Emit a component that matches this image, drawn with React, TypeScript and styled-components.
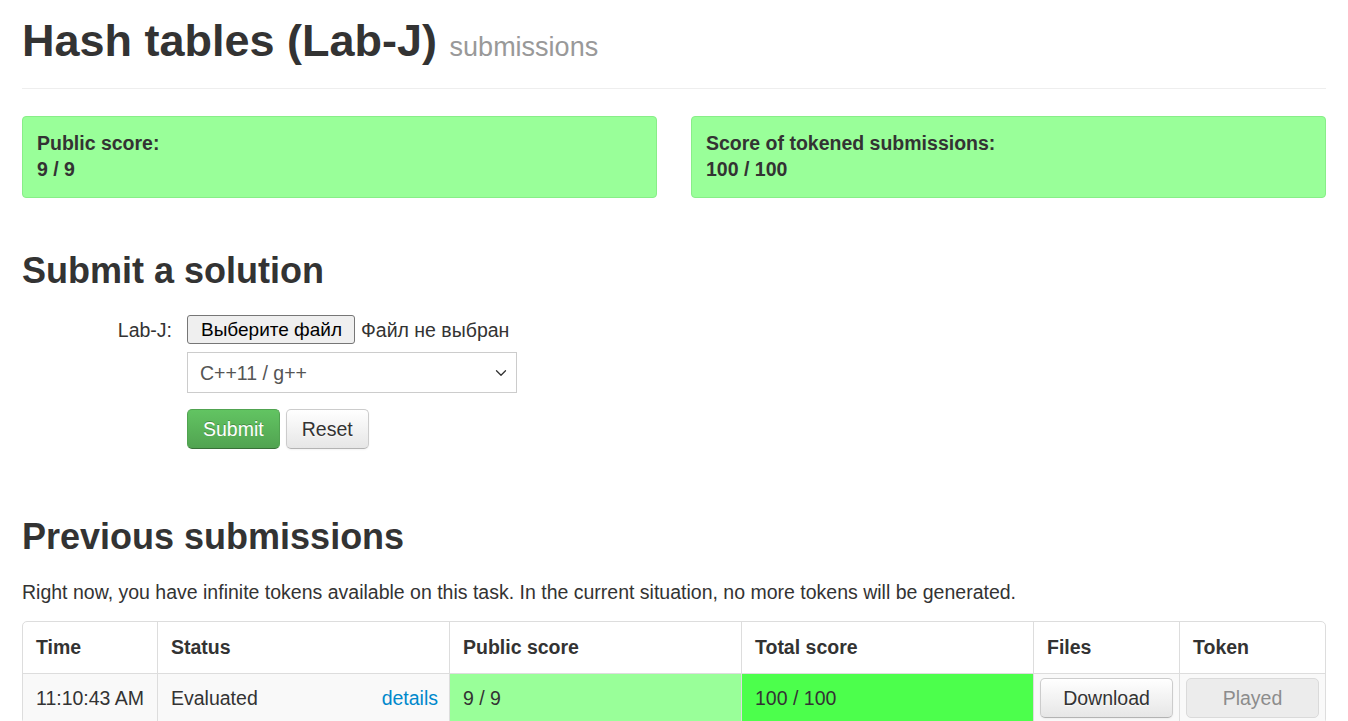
import React from "react";
import styled, { createGlobalStyle } from "styled-components";
import { ChevronDown } from "lucide-react";

const Global = createGlobalStyle`
  * { box-sizing: border-box; }
  html, body { margin: 0; padding: 0; background: #fff; }
  body {
    font-family: "Liberation Sans", Arial, sans-serif;
    font-size: 19.5px;
    line-height: 26px;
    color: #333;
  }
`;

const Page = styled.div`
  padding: 0 22px;
  width: 1348px;
`;

const PageHeader = styled.div`
  padding: 16px 0 16px;
  border-bottom: 1px solid #eee;
`;

const Title = styled.h1`
  margin: 0;
  font-size: 45px;
  line-height: 50px;
  font-weight: bold;
  color: #333;
`;

const Small = styled.small`
  font-size: 27px;
  font-weight: normal;
  color: #999;
`;

const ScoreGrid = styled.div`
  display: grid;
  grid-template-columns: 1fr 1fr;
  column-gap: 34px;
  margin-top: 27px;
`;

const ScoreBox = styled.div`
  background: #99ff99;
  border: 1px solid #88ee88;
  border-radius: 4px;
  padding: 13px 14px 15px;
  font-weight: bold;
  line-height: 26px;
`;

const SectionTitle = styled.h2<{ $top: number; $bottom: number }>`
  margin: ${(p) => p.$top}px 0 ${(p) => p.$bottom}px;
  font-size: 36px;
  line-height: 44px;
  font-weight: bold;
  color: #333;
`;

const FormRow = styled.div`
  display: grid;
  grid-template-columns: 150px 1fr;
  column-gap: 15px;
`;

const Label = styled.label`
  text-align: right;
  line-height: 29px;
  padding-top: 1px;
`;

const Controls = styled.div`
  display: flex;
  flex-direction: column;
  align-items: flex-start;
`;

const FileLine = styled.div`
  display: flex;
  align-items: center;
  gap: 6px;
  height: 29px;
`;

const FileButton = styled.button`
  height: 29px;
  padding: 0 12px 0 13px;
  background: #efefef;
  border: 1px solid #767676;
  border-radius: 3px;
  font-family: "Liberation Sans", Arial, sans-serif;
  font-size: 19px;
  color: #000;
`;

const FileName = styled.span`
  font-size: 19.5px;
  color: #333;
`;

const Select = styled.div`
  margin-top: 8px;
  width: 330px;
  height: 41px;
  border: 1px solid #ccc;
  display: flex;
  align-items: center;
  justify-content: space-between;
  padding: 0 6px 0 12px;
  color: #555;
  background: #fff;
`;

const ButtonRow = styled.div`
  margin-top: 16px;
  display: flex;
  gap: 6px;
`;

const Btn = styled.button<{ $variant?: "success" | "default" | "disabled"; $block?: boolean }>`
  font-family: "Liberation Sans", Arial, sans-serif;
  font-size: 19.5px;
  line-height: 26px;
  padding: 6px 15px;
  border-radius: 5px;
  border: 1px solid;
  cursor: pointer;
  width: ${(p) => (p.$block ? "100%" : "auto")};
  ${(p) =>
    p.$variant === "success"
      ? `
    color: #fff;
    text-shadow: 0 -1px 0 rgba(0,0,0,0.25);
    background: linear-gradient(to bottom, #62c462, #51a351);
    border-color: #51a351 #51a351 #387038;
  `
      : p.$variant === "disabled"
      ? `
    color: #8c8c8c;
    background: #ececec;
    border-color: #dadada;
    cursor: default;
  `
      : `
    color: #333;
    text-shadow: 0 1px 1px rgba(255,255,255,0.75);
    background: linear-gradient(to bottom, #ffffff, #e6e6e6);
    border-color: #cccccc #cccccc #b3b3b3;
    box-shadow: inset 0 1px 0 rgba(255,255,255,.2), 0 1px 2px rgba(0,0,0,.05);
  `}
`;

const Para = styled.p`
  margin: 20px 0 16px;
  line-height: 26px;
`;

const Table = styled.table`
  width: 1304px;
  table-layout: fixed;
  border-collapse: separate;
  border-spacing: 0;
  border: 1px solid #ddd;
  border-radius: 5px;
`;

const Th = styled.th<{ $first?: boolean }>`
  text-align: left;
  font-weight: bold;
  padding: 13px 13px;
  line-height: 25px;
  border-left: ${(p) => (p.$first ? "none" : "1px solid #ddd")};
`;

const Tr = styled.tr`
  background: #f9f9f9;
`;

const Td = styled.td<{ $first?: boolean; $bg?: string; $tight?: boolean }>`
  padding: ${(p) => (p.$tight ? "4px 6px" : "12px 11px 12px 13px")};
  line-height: 25px;
  vertical-align: top;
  border-top: 1px solid #ddd;
  border-left: ${(p) => (p.$first ? "none" : "1px solid #ddd")};
  background: ${(p) => p.$bg || "transparent"};
`;

const Details = styled.a`
  float: right;
  color: #0088cc;
  text-decoration: none;
`;

export default function App() {
  return (
    <Page>
      <Global />
      <PageHeader>
        <Title>
          Hash tables (Lab-J) <Small>submissions</Small>
        </Title>
      </PageHeader>

      <ScoreGrid>
        <ScoreBox>
          Public score:
          <br />9 / 9
        </ScoreBox>
        <ScoreBox>
          Score of tokened submissions:
          <br />100 / 100
        </ScoreBox>
      </ScoreGrid>

      <SectionTitle $top={51} $bottom={22}>Submit a solution</SectionTitle>

      <FormRow>
        <Label>Lab-J:</Label>
        <Controls>
          <FileLine>
            <FileButton type="button">Выберите файл</FileButton>
            <FileName>Файл не выбран</FileName>
          </FileLine>
          <Select>
            <span>C++11 / g++</span>
            <ChevronDown size={18} strokeWidth={1.75} color="#333" />
          </Select>
          <ButtonRow>
            <Btn $variant="success">Submit</Btn>
            <Btn>Reset</Btn>
          </ButtonRow>
        </Controls>
      </FormRow>

      <SectionTitle $top={66} $bottom={0}>Previous submissions</SectionTitle>
      <Para>
        Right now, you have infinite tokens available on this task. In the current situation, no
        more tokens will be generated.
      </Para>

      <Table>
        <colgroup>
          <col style={{ width: 134 }} />
          <col style={{ width: 292 }} />
          <col style={{ width: 292 }} />
          <col style={{ width: 292 }} />
          <col style={{ width: 146 }} />
          <col style={{ width: 146 }} />
        </colgroup>
        <thead>
          <tr>
            <Th $first>Time</Th>
            <Th>Status</Th>
            <Th>Public score</Th>
            <Th>Total score</Th>
            <Th>Files</Th>
            <Th>Token</Th>
          </tr>
        </thead>
        <tbody>
          <Tr>
            <Td $first>11:10:43 AM</Td>
            <Td>
              Evaluated
              <Details href="#">details</Details>
            </Td>
            <Td $bg="#99ff99">9 / 9</Td>
            <Td $bg="#4cff4c">100 / 100</Td>
            <Td $tight>
              <Btn $block>Download</Btn>
            </Td>
            <Td $tight>
              <Btn $block $variant="disabled">Played</Btn>
            </Td>
          </Tr>
        </tbody>
      </Table>
    </Page>
  );
}
